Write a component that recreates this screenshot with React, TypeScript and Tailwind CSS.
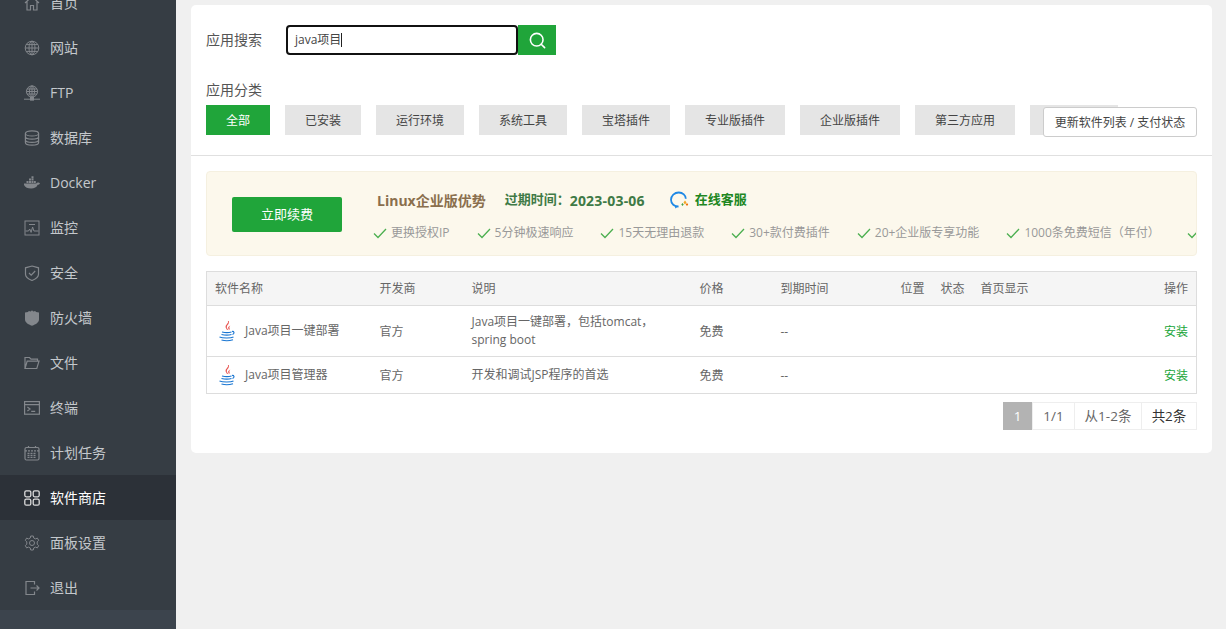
import { Search } from "lucide-react";
import type { ReactNode } from "react";

const font = "font-['Open_Sans','Noto_Sans_CJK_SC',sans-serif]";

function Ico({ children, sw = 1.2 }: { children: ReactNode; sw?: number }) {
  return (
    <svg viewBox="0 0 16 16" width="16" height="16" fill="none" stroke="currentColor" strokeWidth={sw}>
      {children}
    </svg>
  );
}

const menu: { name: string; icon: ReactNode; active?: boolean }[] = [
  { name: "首页", icon: <Ico><path d="M1 8l7-6.5L15 8M3 6.5V15h3.5v-4.5h3V15H13V6.5" /></Ico> },
  {
    name: "网站",
    icon: <Ico sw={1}><circle cx="8" cy="8" r="6.8" /><ellipse cx="8" cy="8" rx="3" ry="6.8" /><path d="M8 1v14M1.2 8h13.6M2.2 4.6h11.6M2.2 11.4h11.6" /></Ico>,
  },
  {
    name: "FTP",
    icon: <Ico sw={1}><circle cx="8" cy="6.5" r="5.6" /><ellipse cx="8" cy="6.5" rx="2.5" ry="5.6" /><path d="M8 1v11M2.4 6.5h11.2M3 4h10M3 9h10M0 14.2h16" /><rect x="6.5" y="12.5" width="3" height="2.6" fill="currentColor" /></Ico>,
  },
  {
    name: "数据库",
    icon: <Ico><ellipse cx="8" cy="3.4" rx="6.6" ry="2.6" /><path d="M1.4 3.4v9.2c0 1.4 3 2.6 6.6 2.6s6.6-1.2 6.6-2.6V3.4M1.4 6.6c0 1.4 3 2.6 6.6 2.6s6.6-1.2 6.6-2.6M1.4 9.7c0 1.4 3 2.6 6.6 2.6s6.6-1.2 6.6-2.6" /></Ico>,
  },
  {
    name: "Docker",
    icon: (
      <svg viewBox="0 0 16 16" width="16" height="16" fill="currentColor">
        <path d="M0 8.4h12.2c.5-.9 1.6-1.2 2.4-.9l1.4.7c-.5 1-1.3 1.5-2.3 1.5-1 2.6-3.4 3.8-6.5 3.8-4.2 0-7-1.6-7.7-5.1z" />
        <path d="M2.5 6h2v2h-2zM5 6h2v2H5zM7.5 6h2v2h-2zM10 6h1.8v2H10zM5 3.6h2v2H5zM7.5 3.6h2v2h-2zM7.5 1.3h2v2h-2z" />
      </svg>
    ),
  },
  {
    name: "监控",
    icon: <Ico sw={1}><rect x="1" y="1" width="14" height="14" /><path d="M1.5 11h3l1.2-2 1.4 3.4L8.6 7l1.3 4h4.6M5 4.5h6" /></Ico>,
  },
  {
    name: "安全",
    icon: <Ico><path d="M8 1l6.5 1.8v6.4c0 2.8-3 4.9-6.5 6.3-3.5-1.4-6.5-3.5-6.5-6.3V2.8L8 1z" /><path d="M5 8l2.2 2.2L11.2 6" /></Ico>,
  },
  {
    name: "防火墙",
    icon: (
      <svg viewBox="0 0 16 16" width="16" height="16" fill="currentColor">
        <path d="M1 2.5l3-.6.8-1 2 .6L8 .2l1.2 1.3 2-.6.8 1 3 .6v7c0 2.8-3 4.9-7 6.3-4-1.4-7-3.5-7-6.3z" />
      </svg>
    ),
  },
  {
    name: "文件",
    icon: <Ico><path d="M1 13.5V2.5h4.5L7 4.2h6.5v2M1 13.5h11.8L15 6.2H3.2L1 13.5z" /></Ico>,
  },
  {
    name: "终端",
    icon: <Ico><rect x=".6" y="1.6" width="14.8" height="12.6" /><path d="M.6 4.6h14.8M3.4 7l2.6 2-2.6 2M7.2 11.4h4" /></Ico>,
  },
  {
    name: "计划任务",
    icon: <Ico><rect x="1" y="2.5" width="14" height="12.5" rx="1.5" /><path d="M1 5.8h14M4.5 1v3M11.5 1v3M3.5 8.3h9M3.5 10.3h9M3.5 12.3h9" strokeDasharray="2 1" /></Ico>,
  },
  {
    name: "软件商店",
    active: true,
    icon: <Ico sw={1.3}><rect x=".8" y=".8" width="6" height="6" rx="1.5" /><rect x="9.2" y=".8" width="6" height="6" rx="1.5" /><rect x=".8" y="9.2" width="6" height="6" rx="1.5" /><rect x="9.2" y="9.2" width="6" height="6" rx="1.5" /></Ico>,
  },
  {
    name: "面板设置",
    icon: <Ico sw={1}><path d="M6.7 1h2.6l.4 2 1.8.9 1.9-.8 1.3 2.3-1.5 1.4v2.4l1.5 1.4-1.3 2.3-1.9-.8-1.8.9-.4 2H6.7l-.4-2-1.8-.9-1.9.8-1.3-2.3 1.5-1.4V6.8L1.3 5.4l1.3-2.3 1.9.8 1.8-.9z" /><circle cx="8" cy="8" r="2.5" /></Ico>,
  },
  {
    name: "退出",
    icon: <Ico><path d="M10.5 4.5V1.5H2v13h8.5v-3M6.5 8H15M12.5 5.5L15 8l-2.5 2.5" /></Ico>,
  },
];

const tabs = [
  { name: "全部", w: "w-[64px]" },
  { name: "已安装", w: "w-[76px]" },
  { name: "运行环境", w: "w-[88px]" },
  { name: "系统工具", w: "w-[88px]" },
  { name: "宝塔插件", w: "w-[88px]" },
  { name: "专业版插件", w: "w-[100px]" },
  { name: "企业版插件", w: "w-[100px]" },
  { name: "第三方应用", w: "w-[100px]" },
  { name: "一键部署", w: "w-[88px]" },
];

const perks = ["更换授权IP", "5分钟极速响应", "15天无理由退款", "30+款付费插件", "20+企业版专享功能", "1000条免费短信（年付）", "2张SSL商用证书（年付）"];

function Tick() {
  return (
    <svg viewBox="0 0 14 11" width="14" height="11" fill="none" stroke="#4caf50" strokeWidth="1.3" className="mr-[4px] shrink-0">
      <path d="M1 5.5l4 4L13 1" />
    </svg>
  );
}

function JavaIcon() {
  return (
    <svg viewBox="0 0 18 22" width="18" height="22" fill="none">
      <path d="M10.5 1c.8 2.5-3.5 4-2.5 6.5.4 1 1.2 1.7 1.5 2.5-.2-1.4-1.5-2.2-1-3.7.5-1.3 2.6-2.4 2-5.300z" fill="#e53935" stroke="#e53935" strokeWidth=".5" />
      <path d="M12.5 5.5c-1.500.8-2.600 1.500-2.200 2.800.2.600.7 1 .5 2 .8-.7 1-1.500.6-2.400-.3-.8.1-1.600 1.100-2.400z" fill="#e53935" />
      <path d="M4 12c2.5.6 7.5.6 9.5-.1M3.500 14.500c2.500.6 8 .6 10-.1M1.500 17c3 1.300 11.500 1.300 14 0" stroke="#1976d2" strokeWidth="1.1" />
      <path d="M14 11.500c2-.5 3 1.800.5 3M3.500 20c3 .9 8 .9 11.500-.3" stroke="#1976d2" strokeWidth="1.1" />
    </svg>
  );
}

function ChatIcon() {
  return (
    <svg viewBox="0 0 20 18" width="20" height="18" fill="none">
      <path d="M8.500 15.500c-4 0-7.500-2.500-7.500-6.700S4.500 1.500 8.800 1.500c4 0 7 2.800 7 6.200" stroke="#1e88e5" strokeWidth="1.8" />
      <path d="M5.500 14.500l-.5 3 3.500-2" fill="#1e88e5" />
      <path d="M15 9.500l1.500 2-1.500 2-1.500-2z" fill="#f5a623" />
      <path d="M12.500 12l1.200 1.500-1.200 1.500-1.200-1.500z" fill="#43a047" />
      <path d="M17 12l1.200 1.500-1.200 1.500-1.200-1.500z" fill="#ef6c00" />
    </svg>
  );
}

const rows = [
  { name: "Java项目一键部署", desc: "Java项目一键部署，包括tomcat，spring boot", h: "h-[51px]" },
  { name: "Java项目管理器", desc: "开发和调试JSP程序的首选", h: "h-[37px]" },
];

export default function App() {
  return (
    <div className={`flex h-screen overflow-hidden bg-[#f0f0f0] ${font}`}>
      <aside className="w-[176px] shrink-0 bg-[#3c444d] overflow-hidden">
        <ul className="-mt-[20px] bg-[#363d44]">
          {menu.map((m) => (
            <li
              key={m.name}
              className={`h-[45px] flex items-center gap-[10px] pl-[24px] text-[14px] ${
                m.active ? "bg-[#2c3138] text-white" : "text-[#c4c8cc]"
              }`}
            >
              <span className={m.active ? "text-[#dcdcdc]" : "text-[#83878c]"}>{m.icon}</span>
              {m.name}
            </li>
          ))}
        </ul>
      </aside>

      <main className="flex-1 min-w-0 pl-[15px] pr-[14px] pt-[5px]">
        <div className="bg-white rounded-[5px] h-[448px]">
          <section className="relative h-[151px] border-b border-[#e0e0e0] px-[15px] pt-[20px] text-[14px] text-[#555]">
            <div className="flex items-center h-[30px]">
              <span className="w-[80px] pb-[2px]">应用搜索</span>
              <div className="w-[232px] h-[30px] border-2 border-[#111] rounded-[4px] pl-[7px] flex items-center text-[12px] text-[#444]">
                java项目
                <span className="w-px h-[14px] bg-[#222]" />
              </div>
              <button className="w-[38px] h-[30px] bg-[#20a53a] flex items-center justify-center text-white">
                <Search size={19} strokeWidth={2} />
              </button>
            </div>
            <div className="mt-[25px] h-[20px] leading-[20px]">应用分类</div>
            <div className="flex gap-[15px] mt-[5px] overflow-hidden">
              {tabs.map((t, i) => (
                <span
                  key={t.name}
                  className={`${t.w} h-[30px] pt-px shrink-0 flex items-center justify-center text-[12px] ${
                    i === 0 ? "bg-[#20a53a] text-white" : "bg-[#e5e5e5] text-[#444]"
                  }`}
                >
                  {t.name}
                </span>
              ))}
            </div>
            <button className="absolute right-[15px] top-[102px] w-[154px] h-[30px] pt-px bg-white border border-[#ccc] rounded-[3px] text-[12px] text-[#444]">
              更新软件列表 / 支付状态
            </button>
          </section>

          <div className="px-[15px] pt-[15px]">
            <div className="h-[85px] bg-[#fcf8ec] border border-[#f5f0e0] rounded-[4px] flex overflow-hidden">
              <button className="ml-[25px] mt-[25px] w-[110px] h-[35px] shrink-0 bg-[#20a53a] rounded-[2px] text-white text-[13px]">
                立即续费
              </button>
              <div className="ml-[30px] pt-[18px] min-w-0">
                <div className="flex items-center h-[20px] text-[14px] font-bold whitespace-nowrap">
                  <span className="text-[#8a6f4d] ml-[5px]">Linux企业版优势</span>
                  <span className="text-[#3f7a46] ml-[19px] text-[13px]">过期时间：</span>
                  <span className="text-[#3f7a46] tracking-[.2px]">2023-03-06</span>
                  <span className="ml-[25px] mr-[5px] flex"><ChatIcon /></span>
                  <span className="text-[#20871f] text-[13px]">在线客服</span>
                </div>
                <div className="flex mt-[14px] ml-px text-[12px] text-[#999] whitespace-nowrap">
                  {perks.map((p) => (
                    <span key={p} className="flex items-center mr-[27px]">
                      <Tick />
                      {p}
                    </span>
                  ))}
                </div>
              </div>
            </div>

            <table className="w-full mt-[15px] table-fixed border-collapse border border-[#ddd] text-[12px] text-[#666]">
              <colgroup>
                <col className="w-[165px]" />
                <col className="w-[92px]" />
                <col className="w-[228px]" />
                <col className="w-[81px]" />
                <col className="w-[120px]" />
                <col className="w-[40px]" />
                <col className="w-[40px]" />
                <col />
                <col className="w-[60px]" />
              </colgroup>
              <thead>
                <tr className="h-[34px] bg-[#f5f5f5] text-left border-b border-[#ddd]">
                  {["软件名称", "开发商", "说明", "价格", "到期时间", "位置", "状态", "首页显示"].map((h) => (
                    <th key={h} className="font-normal pl-[8px] whitespace-nowrap">{h}</th>
                  ))}
                  <th className="font-normal pr-[8px] text-right">操作</th>
                </tr>
              </thead>
              <tbody>
                {rows.map((r) => (
                  <tr key={r.name} className={`${r.h} border-b border-[#ddd]`}>
                    <td className="pl-[11px]">
                      <span className="flex items-center gap-[9px] whitespace-nowrap">
                        <JavaIcon />
                        {r.name}
                      </span>
                    </td>
                    <td className="pl-[8px] pt-px">官方</td>
                    <td className="pl-[8px] pr-[20px] leading-[18px]">{r.desc}</td>
                    <td className="pl-[8px] pt-px">免费</td>
                    <td className="pl-[8px] pt-px">--</td>
                    <td />
                    <td />
                    <td />
                    <td className="pr-[8px] pt-[2px] text-right text-[#20a53a]">安装</td>
                  </tr>
                ))}
              </tbody>
            </table>

            <div className="flex justify-end mt-[8px] text-[13.5px] text-[#666]">
              <span className="w-[29px] h-[28px] bg-[#b3b3b3] text-white flex items-center justify-center">1</span>
              <span className="w-[42px] h-[28px] border border-[#eee] border-r-0 flex items-center justify-center">1/1</span>
              <span className="w-[67px] h-[28px] border border-[#eee] border-r-0 flex items-center justify-center">从1-2条</span>
              <span className="w-[56px] h-[28px] border border-[#eee] text-[#333] flex items-center justify-center">共2条</span>
            </div>
          </div>
        </div>
      </main>
    </div>
  );
}
